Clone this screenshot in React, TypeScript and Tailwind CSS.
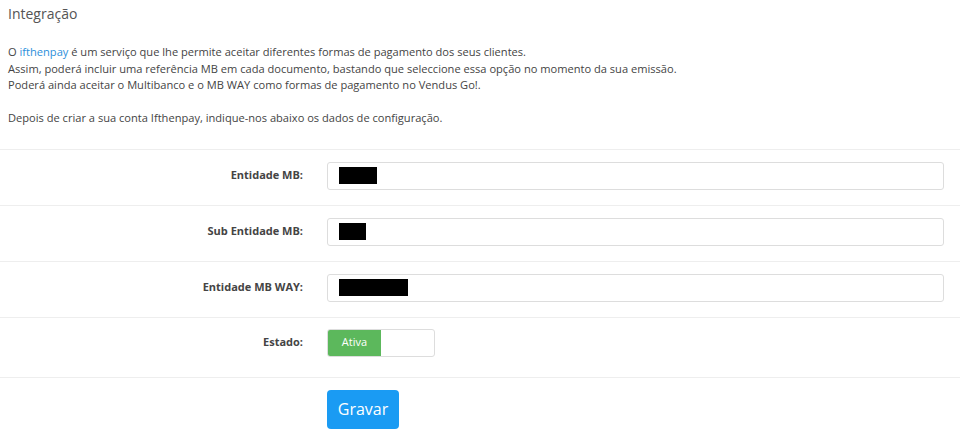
import { useState } from "react"

const fields = [
  { label: "Entidade MB:", mask: "w-[38px]" },
  { label: "Sub Entidade MB:", mask: "w-[27px]" },
  { label: "Entidade MB WAY:", mask: "w-[69px]" },
]

export default function App() {
  const [active, setActive] = useState(true)

  return (
    <div className="w-[960px] h-[435px] bg-white overflow-hidden text-[#444] font-['Open_Sans',sans-serif]">
      <h3 className="px-2 pt-[4px] text-[14px] leading-[20px] text-[#555]">Integração</h3>

      <p className="px-2 mt-[20px] text-[11.1px] leading-[16.5px] text-[#444]">
        O <a className="text-[#2c8fdb]">ifthenpay</a> é um serviço que lhe permite aceitar diferentes formas de pagamento dos seus clientes.
        <br />
        Assim, poderá incluir uma referência MB em cada documento, bastando que seleccione essa opção no momento da sua emissão.
        <br />
        Poderá ainda aceitar o Multibanco e o MB WAY como formas de pagamento no Vendus Go!.
        <br />
        <br />
        Depois de criar a sua conta Ifthenpay, indique-nos abaixo os dados de configuração.
      </p>

      <div className="mt-[22px]">
        {fields.map((f) => (
          <div key={f.label} className="flex items-center border-t border-[#eee] pt-[12px] pb-[15px]">
            <label className="w-[303px] text-right text-[11px] font-bold text-[#444]">{f.label}</label>
            <div className="ml-[24px] flex-1 mr-[16px] h-[28px] border border-[#ddd] rounded-[3px] flex items-center px-[11px]">
              <div className={`${f.mask} h-[17px] bg-black`} />
            </div>
          </div>
        ))}

        <div className="flex items-center border-t border-[#eee] pt-[11px] pb-[20px]">
          <label className="w-[303px] text-right text-[11px] font-bold text-[#444]">Estado:</label>
          <button
            onClick={() => setActive(!active)}
            className="ml-[24px] w-[108px] h-[28px] border border-[#ddd] rounded-[3px] flex overflow-hidden"
          >
            <span className="w-[53px] h-full bg-[#5cb85c] text-white text-[11px] flex items-center justify-center">
              Ativa
            </span>
          </button>
        </div>

        <div className="border-t border-[#eee] pt-[12px]">
          <button className="ml-[327px] w-[72px] h-[39px] rounded-[4px] bg-[#1a9bf3] text-white text-[16px]">
            Gravar
          </button>
        </div>
      </div>
    </div>
  )
}
